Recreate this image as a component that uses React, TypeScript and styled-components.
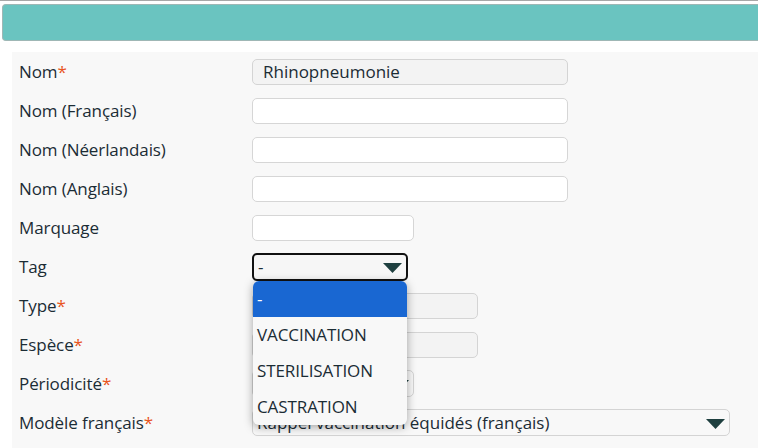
import React from "react";
import styled, { createGlobalStyle } from "styled-components";

const Global = createGlobalStyle`
  html, body { margin: 0; padding: 0; background: #ffffff; }
  body { font-family: "Open Sans", "Noto Sans", sans-serif; color: #1b2c35; }
  * { box-sizing: border-box; }
`;

const Page = styled.div`
  width: 758px;
  height: 448px;
  overflow: hidden;
  border-top: 1px solid #a8a8a8;
  padding-top: 3px;
`;

const Header = styled.div`
  margin-left: 2px;
  height: 37px;
  background: #6ac4c0;
  border: 1px solid #9fb7b5;
  border-right: none;
  border-radius: 4px 0 0 4px;
`;

const Panel = styled.div`
  margin: 11px 0 0 12px;
  background: #f8f8f8;
  padding: 0 0 0 7px;
  height: 400px;
`;

const Form = styled.div`
  display: grid;
  grid-template-columns: 233px 1fr;
  grid-auto-rows: 39px;
  align-items: center;
`;

const Label = styled.div`
  font-size: 17px;
  line-height: 20px;
  letter-spacing: -0.1px;
`;

const Star = styled.span`
  color: #e8541c;
`;

const Field = styled.div`
  position: relative;
  display: flex;
  align-items: center;
`;

const Input = styled.div<{ $w: number; $disabled?: boolean }>`
  width: ${(p) => p.$w}px;
  height: 26px;
  border: 1px solid ${(p) => (p.$disabled ? "#d4d4d4" : "#d6d6d6")};
  background: ${(p) => (p.$disabled ? "#f3f3f3" : "#ffffff")};
  border-radius: 5px;
  padding: 0 10px;
  font-size: 17px;
  line-height: 24px;
  white-space: nowrap;
  overflow: hidden;
`;

const Select = styled.div<{ $w: number; $focused?: boolean }>`
  width: ${(p) => p.$w}px;
  height: ${(p) => (p.$focused ? 28 : 27)}px;
  border: ${(p) => (p.$focused ? "2px solid #111" : "1px solid #d4d4d4")};
  background: ${(p) => (p.$focused ? "#f6f6f6" : "#f8f8f8")};
  border-radius: 5px;
  padding: 0 4px;
  font-size: 17px;
  line-height: 24px;
  display: flex;
  align-items: center;
  justify-content: space-between;
  white-space: nowrap;
  overflow: hidden;
`;

const Arrow = styled.svg`
  flex: none;
  width: 19px;
  height: 10px;
  margin-top: 2px;
`;

const Menu = styled.div`
  position: absolute;
  top: 28px;
  left: 1px;
  width: 154px;
  background: #f8f8f8;
  border-radius: 6px;
  overflow: hidden;
  box-shadow: 0 2px 10px rgba(0, 0, 0, 0.35);
  z-index: 10;
`;

const Option = styled.div<{ $selected?: boolean }>`
  height: 36px;
  padding: 0 4px;
  font-size: 17px;
  line-height: 36px;
  letter-spacing: -0.1px;
  background: ${(p) => (p.$selected ? "#1967d2" : "transparent")};
  color: ${(p) => (p.$selected ? "#ffffff" : "#1b2c35")};
`;

const ArrowIcon = () => (
  <Arrow viewBox="0 0 19 10">
    <path d="M0 0 H19 L9.5 10 Z" fill="#1e3f3f" />
  </Arrow>
);

export default function App() {
  return (
    <>
      <Global />
      <Page>
        <Header />
        <Panel>
          <Form>
            <Label>Nom<Star>*</Star></Label>
            <Field><Input $w={316} $disabled>Rhinopneumonie</Input></Field>

            <Label>Nom (Français)</Label>
            <Field><Input $w={316} /></Field>

            <Label>Nom (Néerlandais)</Label>
            <Field><Input $w={316} /></Field>

            <Label>Nom (Anglais)</Label>
            <Field><Input $w={316} /></Field>

            <Label>Marquage</Label>
            <Field><Input $w={162} /></Field>

            <Label>Tag</Label>
            <Field>
              <Select $w={156} $focused>
                <span>-</span>
                <ArrowIcon />
              </Select>
              <Menu>
                <Option $selected>-</Option>
                <Option>VACCINATION</Option>
                <Option>STERILISATION</Option>
                <Option>CASTRATION</Option>
              </Menu>
            </Field>

            <Label>Type<Star>*</Star></Label>
            <Field><Input $w={226} $disabled /></Field>

            <Label>Espèce<Star>*</Star></Label>
            <Field><Input $w={226} $disabled /></Field>

            <Label>Périodicité<Star>*</Star></Label>
            <Field>
              <Select $w={162}>
                <span />
                <ArrowIcon />
              </Select>
            </Field>

            <Label>Modèle français<Star>*</Star></Label>
            <Field>
              <Select $w={478}>
                <span>Rappel vaccination équidés (français)</span>
                <ArrowIcon />
              </Select>
            </Field>
          </Form>
        </Panel>
      </Page>
    </>
  );
}
